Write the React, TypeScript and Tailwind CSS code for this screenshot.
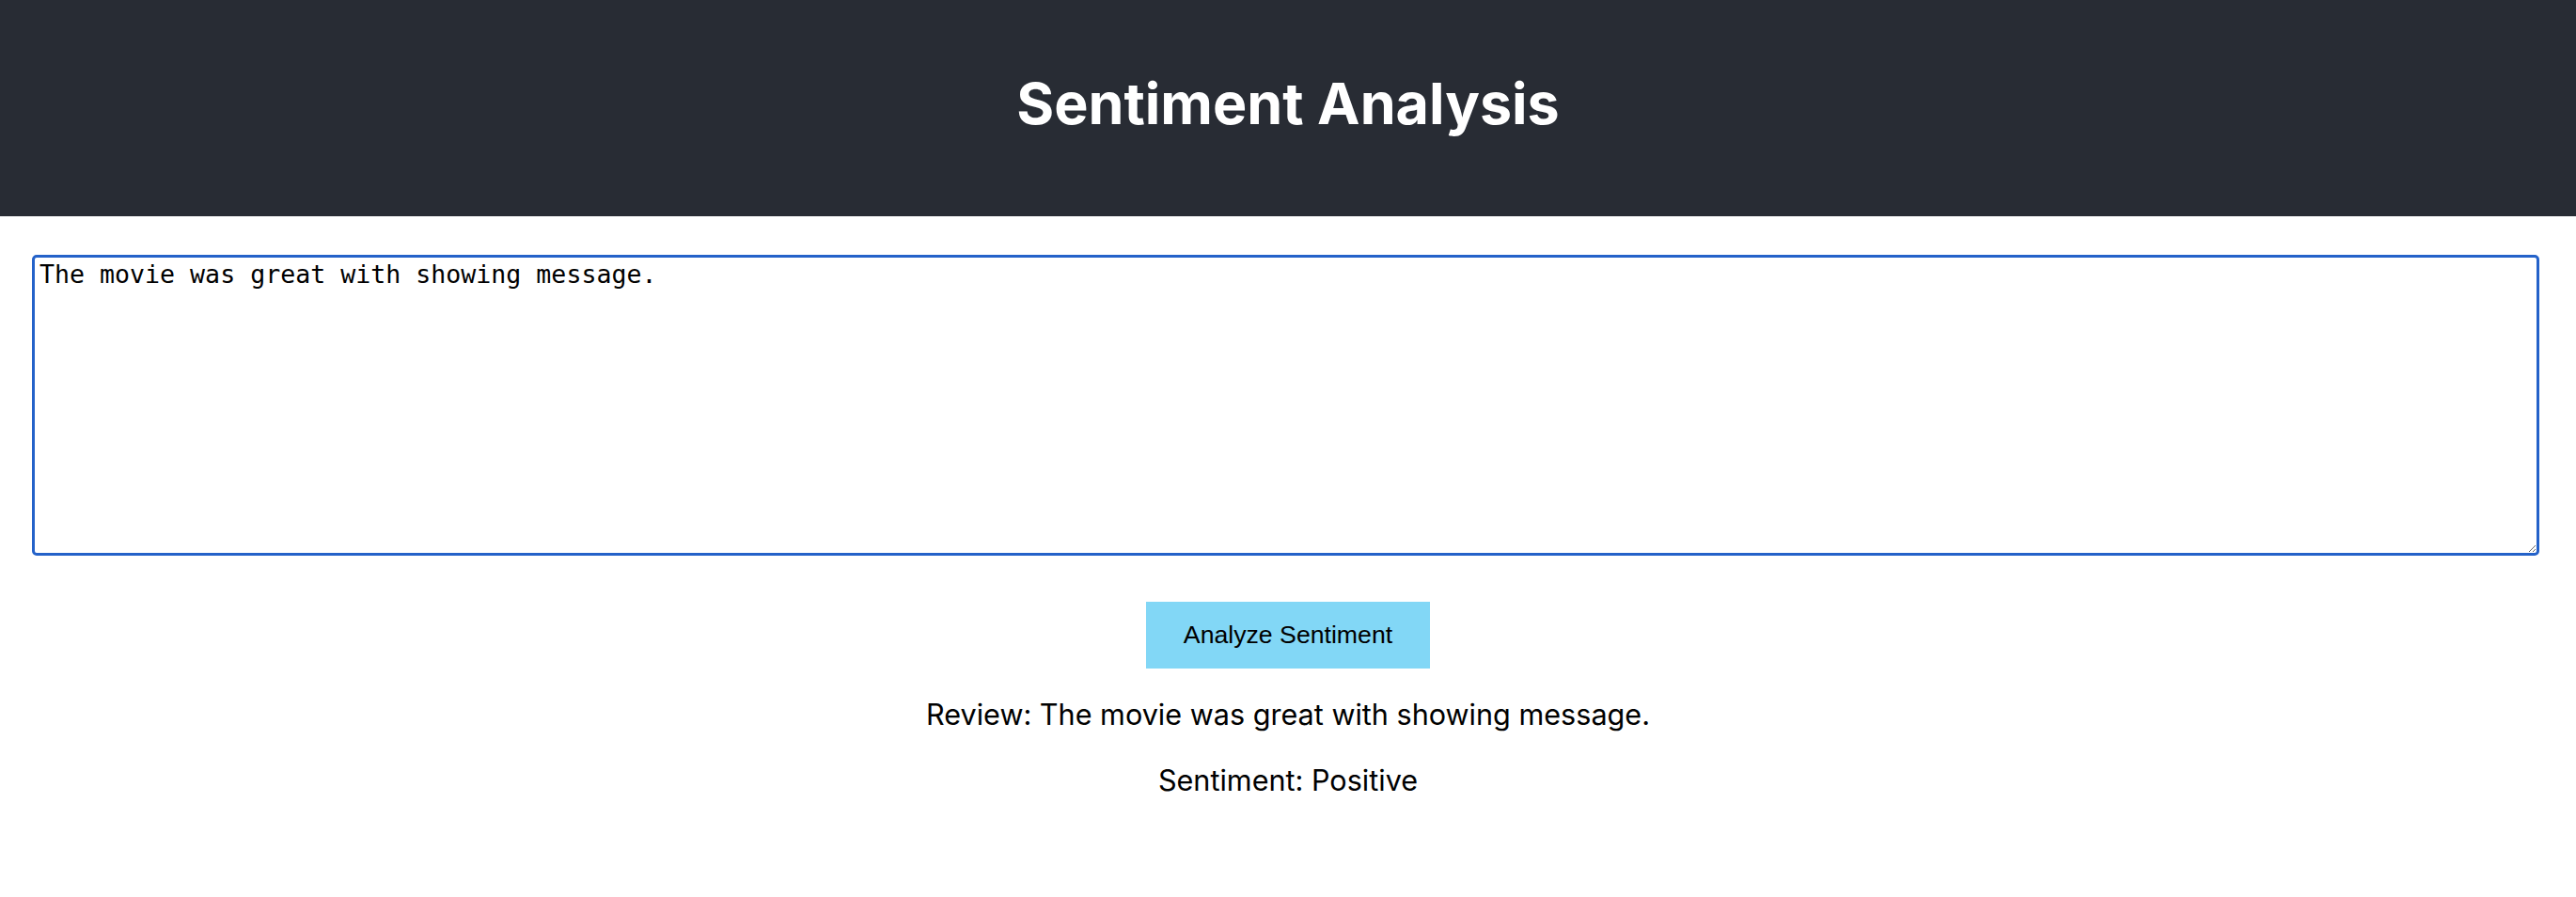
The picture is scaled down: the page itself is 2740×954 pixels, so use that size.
import React from "react";

export default function App() {
  const review = "The movie was great with showing message.";
  return (
    <div className="min-h-[954px] w-full bg-white" style={{ fontFamily: "Inter, 'Noto Sans', sans-serif" }}>
      <header className="flex h-[230px] items-center justify-center bg-[#282c34] pb-[10px]">
        <h1 className="text-[61px] font-bold leading-[76px] text-white" style={{ fontFamily: "Inter, sans-serif" }}>
          Sentiment Analysis
        </h1>
      </header>
      <main className="flex flex-col items-center pt-[41px]">
        <div className="w-full pl-[34px] pr-[39px]">
          <textarea
            defaultValue={review}
            className="block h-[320px] w-full resize rounded-[5px] border-[3px] border-[#2462c9] px-[5px] pt-[2px] text-[26.6px] leading-[31px] text-black outline-none"
            style={{ fontFamily: "'DejaVu Sans Mono', monospace" }}
          />
        </div>
        <button
          className="mt-[49px] bg-[#82d7f6] px-[40px] py-[20px] text-[26.67px] leading-[31px] text-black"
          style={{ fontFamily: "'Liberation Sans', Arial, sans-serif" }}
        >
          Analyze Sentiment
        </button>
        <p className="mt-[30px] text-[30.6px] leading-[38px] text-black">Review: {review}</p>
        <p className="mt-[32px] text-[30.6px] leading-[38px] text-black">Sentiment: Positive</p>
      </main>
    </div>
  );
}
